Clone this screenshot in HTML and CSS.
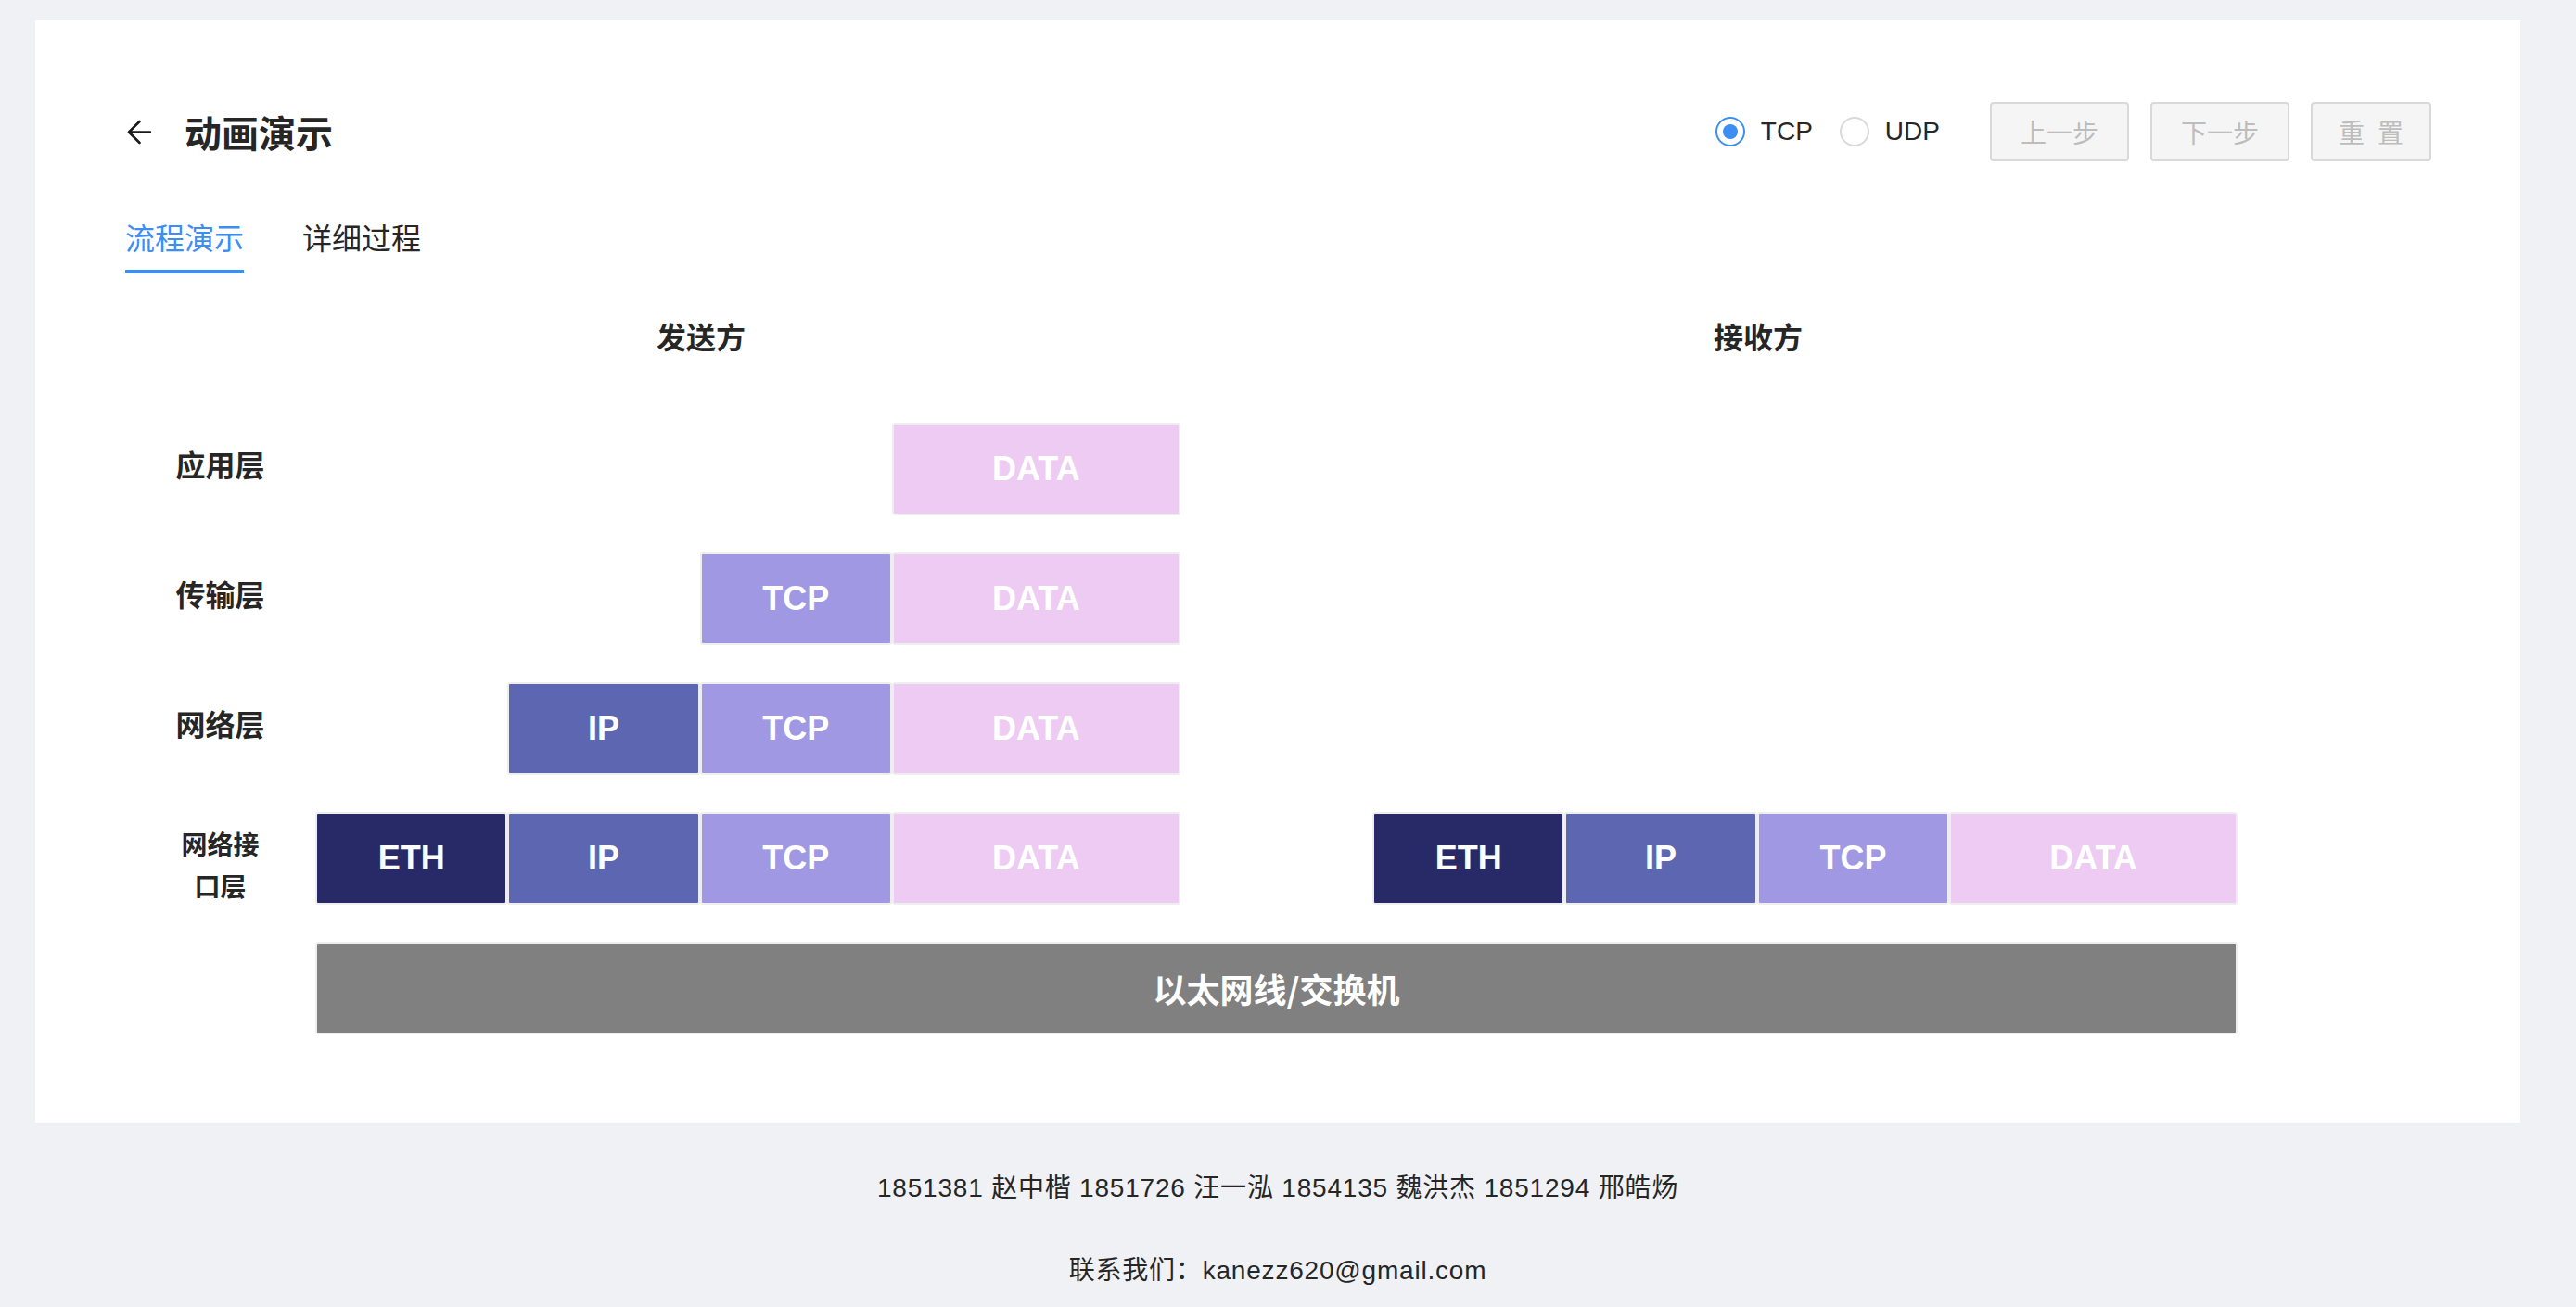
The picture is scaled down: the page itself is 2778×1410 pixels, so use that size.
FILE: index.html
```html
<!DOCTYPE html>
<html lang="zh-CN">
<head>
<meta charset="utf-8">
<title>动画演示</title>
<link rel="stylesheet" href="styles.css">
</head>
<body>
<div class="page">
  <main class="card">
    <header class="header">
      <div class="header-left">
        <svg class="back" viewBox="0 0 26 27" width="26" height="27" aria-hidden="true">
          <path d="M25 13.5H2.5M13.5 2L2 13.5L13.5 25" fill="none" stroke="#1a1a1a" stroke-width="2.6" stroke-linecap="round" stroke-linejoin="round"/>
        </svg>
        <h1 class="title">动画演示</h1>
      </div>
      <div class="header-right">
        <div class="radios">
          <label class="radio radio-checked"><span class="radio-dot"></span><span class="radio-text">TCP</span></label>
          <label class="radio"><span class="radio-dot"></span><span class="radio-text">UDP</span></label>
        </div>
        <div class="buttons">
          <button class="btn" disabled>上一步</button>
          <button class="btn" disabled>下一步</button>
          <button class="btn btn-short" disabled><span class="two-cn">重置</span></button>
        </div>
      </div>
    </header>

    <nav class="tabs">
      <span class="tab tab-active">流程演示</span>
      <span class="tab">详细过程</span>
    </nav>

    <section class="diagram">
      <div class="sides">
        <div class="side">发送方</div>
        <div class="side">接收方</div>
      </div>

      <div class="row">
        <div class="layer">应用层</div>
        <div class="blk data s-data">DATA</div>
      </div>
      <div class="row">
        <div class="layer">传输层</div>
        <div class="blk tcp s-tcp">TCP</div>
        <div class="blk data s-data">DATA</div>
      </div>
      <div class="row">
        <div class="layer">网络层</div>
        <div class="blk ip s-ip">IP</div>
        <div class="blk tcp s-tcp">TCP</div>
        <div class="blk data s-data">DATA</div>
      </div>
      <div class="row">
        <div class="layer layer-small">网络接口层</div>
        <div class="blk eth s-eth">ETH</div>
        <div class="blk ip s-ip">IP</div>
        <div class="blk tcp s-tcp">TCP</div>
        <div class="blk data s-data">DATA</div>
        <div class="blk eth r-eth">ETH</div>
        <div class="blk ip r-ip">IP</div>
        <div class="blk tcp r-tcp">TCP</div>
        <div class="blk data r-data">DATA</div>
      </div>
      <div class="row">
        <div class="layer"></div>
        <div class="blk cable">以太网线/交换机</div>
      </div>
    </section>
  </main>

  <footer class="footer">
    <p>1851381 赵中楷 1851726 汪一泓 1854135 魏洪杰 1851294 邢皓炀</p>
    <p>联系我们：kanezz620@gmail.com</p>
  </footer>
</div>
</body>
</html>
```

FILE: styles.css
```css
* { box-sizing: border-box; }

html, body {
  margin: 0;
  padding: 0;
  background: #f0f1f5;
  font-family: "Liberation Sans", "Noto Sans CJK SC", sans-serif;
  color: #262626;
}

.page {
  margin: 0 60px 0 38px;
  padding-top: 22px;
}

.card {
  background: #ffffff;
  padding: 88px 96px 95px 97px;
}

/* header */
.header {
  display: flex;
  align-items: center;
  justify-content: space-between;
  height: 64px;
}

.header-left {
  display: flex;
  align-items: center;
  padding-left: 2px;
}

.back { display: block; margin-right: 36px; }

.title {
  margin: 0;
  font-family: "Noto Sans CJK SC", sans-serif;
  font-size: 40px;
  font-weight: 700;
  line-height: 56px;
  color: #262626;
}

.header-right {
  display: flex;
  align-items: center;
}

.radios {
  display: flex;
  align-items: center;
  gap: 29px;
  margin-right: 54px;
}

.radio {
  display: flex;
  align-items: center;
  font-size: 28px;
  color: #262626;
}

.radio-dot {
  width: 32px;
  height: 32px;
  border: 2px solid #d9d9d9;
  border-radius: 50%;
  margin-right: 17px;
  position: relative;
  background: #fff;
}

.radio-checked .radio-dot { border-color: #3d8ef3; }

.radio-checked .radio-dot::after {
  content: "";
  position: absolute;
  left: 6px;
  top: 6px;
  width: 16px;
  height: 16px;
  border-radius: 50%;
  background: #3d8ef3;
}

.radio-text { line-height: 40px; }

.buttons {
  display: flex;
  gap: 23px;
}

.btn {
  height: 64px;
  padding: 0 31px;
  background: #f5f5f5;
  border: 2px solid #d9d9d9;
  border-radius: 4px;
  color: #bdbdbd;
  font-family: "Noto Sans CJK SC", sans-serif;
  font-size: 28px;
  line-height: 60px;
  white-space: nowrap;
}

.btn-short { padding: 0 28px; }

.two-cn {
  letter-spacing: 0.5em;
  margin-right: -0.5em;
}

/* tabs */
.tabs {
  display: flex;
  gap: 63px;
  margin-top: 59px;
}

.tab {
  font-family: "Noto Sans CJK SC", sans-serif;
  font-size: 32px;
  line-height: 44px;
  padding-bottom: 14px;
  color: #262626;
}

.tab-active {
  color: #3d8ef3;
  border-bottom: 4px solid #3d8ef3;
}

/* diagram */
.diagram {
  width: 2278px;
  margin-top: 45px;
}

.sides {
  display: grid;
  grid-template-columns: 1140px 1140px;
  margin-left: 51px;
  margin-bottom: 72px;
}

.side {
  text-align: center;
  font-family: "Noto Sans CJK SC", sans-serif;
  font-size: 32px;
  font-weight: 700;
  line-height: 44px;
}

.row {
  display: grid;
  grid-template-columns: 205px repeat(20, 1fr);
  grid-template-rows: 100px;
  height: 100px;
  margin-bottom: 40px;
}

.row:last-child { margin-bottom: 0; }

.layer {
  grid-column: 1;
  grid-row: 1;
  align-self: center;
  justify-self: center;
  max-width: 100px;
  padding-bottom: 12px;
  text-align: center;
  font-family: "Noto Sans CJK SC", sans-serif;
  font-size: 32px;
  font-weight: 700;
  line-height: 44px;
  color: #262626;
}

.layer-small {
  font-size: 28px;
  line-height: 45px;
  padding-bottom: 0;
  padding-top: 14px;
}

.blk {
  grid-row: 1;
  display: flex;
  align-items: center;
  justify-content: center;
  border: 2px solid #eeeeee;
  border-radius: 3px;
  color: #ffffff;
  font-size: 36px;
  font-weight: 700;
}

.eth { background: #272a66; }
.ip { background: #5d66b0; }
.tcp { background: #a098e3; }
.data { background: #eecbf3; }

.s-eth { grid-column: 2 / span 2; }
.s-ip { grid-column: 4 / span 2; }
.s-tcp { grid-column: 6 / span 2; }
.s-data { grid-column: 8 / span 3; }
.r-eth { grid-column: 13 / span 2; }
.r-ip { grid-column: 15 / span 2; }
.r-tcp { grid-column: 17 / span 2; }
.r-data { grid-column: 19 / span 3; }

.cable {
  grid-column: 2 / span 20;
  background: #808080;
  font-family: "Noto Sans CJK SC", sans-serif;
}

/* footer */
.footer {
  text-align: center;
  font-size: 28px;
  letter-spacing: 0.8px;
  color: #262626;
  padding-top: 49px;
}

.footer p {
  margin: 0 0 45px;
  line-height: 44px;
}
```
